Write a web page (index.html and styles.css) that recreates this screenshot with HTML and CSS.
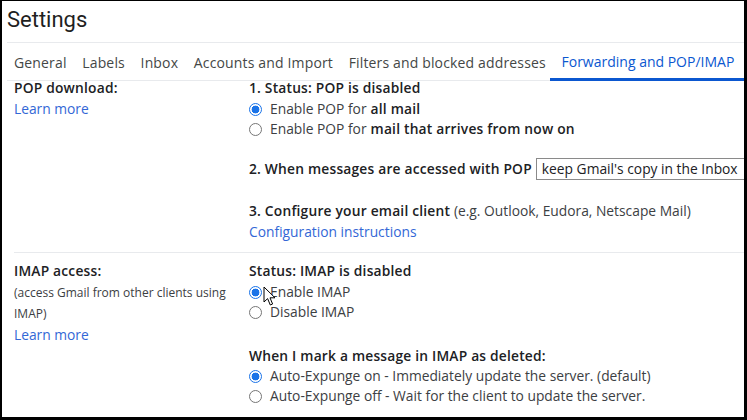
FILE: index.html
```html
<!DOCTYPE html>
<html>
<head>
<meta charset="utf-8">
<link rel="stylesheet" href="styles.css">
</head>
<body>
<div class="frame">
  <h1 class="title">Settings</h1>
  <nav class="tabs">
    <span class="tab">General</span>
    <span class="tab">Labels</span>
    <span class="tab">Inbox</span>
    <span class="tab">Accounts and Import</span>
    <span class="tab">Filters and blocked addresses</span>
    <span class="tab active">Forwarding and POP/IMAP</span>
  </nav>

  <section class="row pop">
    <div class="label">
      <div class="heading">POP download:</div>
      <a class="link">Learn more</a>
    </div>
    <div class="options">
      <div class="heading">1. Status: POP is disabled</div>
      <label class="radio"><span class="dot checked"></span>Enable POP for <b>all mail</b></label>
      <label class="radio"><span class="dot"></span>Enable POP for <b>mail that arrives from now on</b></label>
      <div class="line-select"><span class="heading">2. When messages are accessed with POP</span><span class="select">keep Gmail's copy in the Inbox</span></div>
      <div class="heading mt">3. Configure your email client <span class="normal">(e.g. Outlook, Eudora, Netscape Mail)</span></div>
      <a class="link">Configuration instructions</a>
    </div>
  </section>

  <section class="row imap">
    <div class="label">
      <div class="heading">IMAP access:</div>
      <div class="note">(access Gmail from other clients using IMAP)</div>
      <a class="link">Learn more</a>
    </div>
    <div class="options">
      <div class="heading">Status: IMAP is disabled</div>
      <label class="radio"><span class="dot checked"></span>Enable IMAP</label>
      <label class="radio"><span class="dot"></span>Disable IMAP</label>
      <div class="heading mt2">When I mark a message in IMAP as deleted:</div>
      <label class="radio"><span class="dot checked"></span>Auto-Expunge on - Immediately update the server. (default)</label>
      <label class="radio"><span class="dot"></span>Auto-Expunge off - Wait for the client to update the server.</label>
    </div>
  </section>

  <svg class="cursor" width="14" height="21" viewBox="0 0 14 21">
    <path d="M1 1 L1 16 L4.6 12.6 L7.3 19 L9.6 18 L7 11.8 L12 11.8 Z" fill="#fff" stroke="#000" stroke-width="1" stroke-linejoin="round"/>
  </svg>
</div>
</body>
</html>
```
FILE: styles.css
```css
* { box-sizing: border-box; }
html, body { margin: 0; padding: 0; background: #fff; }
body {
  font-family: "Open Sans", "Liberation Sans", Arial, sans-serif;
  font-size: 13.8px;
  color: #3c4043;
}
.frame {
  position: relative;
  width: 747px;
  height: 420px;
  overflow: hidden;
  border-style: solid;
  border-color: #000;
  border-width: 1px 3px 3px 2px;
  background: #fff;
}
.title {
  margin: 0 0 0 5px;
  padding: 5px 0 0 0;
  height: 42px;
  font-size: 22px;
  font-weight: 400;
  line-height: 28px;
  color: #1f1f1f;
  border-bottom: 1px solid #e8eaed;
  font-family: Roboto, "Open Sans", sans-serif;
}
.tabs {
  display: flex;
  gap: 15.7px;
  height: 38px;
  align-items: stretch;
  border-bottom: 1px solid #e8eaed;
  margin-left: 5px;
  padding-left: 7px;
  white-space: nowrap;
}
.tab {
  display: flex;
  align-items: center;
  color: #444746;
  font-size: 14px;
  letter-spacing: 0.15px;
  padding-top: 1px;
}
.tab.active {
  color: #0b57d0;
  letter-spacing: 0;
  padding: 1px 11px 0 11px;
  margin-left: -11px;
  border-bottom: 3px solid #0b57d0;
  margin-bottom: -1px;
}
.row {
  display: flex;
  margin-left: 12px;
}
.pop {
  margin-top: -3px;
  padding-bottom: 10px;
  border-bottom: 1px solid #e8eaed;
}
.imap { padding-top: 8px; }
.label { width: 235px; flex: none; }
.options { flex: 1; white-space: nowrap; }
.heading {
  font-weight: 600;
  color: #202124;
  line-height: 20px;
  letter-spacing: 0.2px;
}
.heading .normal { font-weight: 400; color: #3c4043; letter-spacing: 0; }
.link {
  display: block;
  color: #3367d6;
  line-height: 20px;
  text-decoration: none;
  margin-top: 1px;
}
.note {
  font-size: 12px;
  line-height: 20.5px;
  color: #3c4043;
  padding-right: 10px;
  margin-top: 2px;
}
.imap .label .link { line-height: 20.5px; margin-top: 0.5px; }
.radio {
  display: flex;
  align-items: center;
  line-height: 20px;
  color: #3c4043;
}
.radio:first-of-type { margin-top: 1px; }
.radio b { font-weight: 600; color: #202124; margin-left: 4px; letter-spacing: 0.2px; }
.dot {
  width: 13px;
  height: 13px;
  border-radius: 50%;
  border: 1px solid #767676;
  margin-right: 8px;
  flex: none;
  background: #fff;
}
.dot.checked {
  border: 1.5px solid #1a73e8;
  background: radial-gradient(circle, #1a73e8 0 3.6px, #fff 4.2px);
}
.line-select {
  display: flex;
  align-items: center;
  gap: 4px;
  margin-top: 18px;
  height: 24px;
}
.select {
  border: 1px solid #8a8a8a;
  height: 22px;
  line-height: 20px;
  padding: 0 10px 0 5px;
  color: #202124;
  min-width: 220px;
}
.mt { margin-top: 20px; }
.mt2 { margin-top: 24px; }
.cursor {
  position: absolute;
  left: 261px;
  top: 285px;
}
```
